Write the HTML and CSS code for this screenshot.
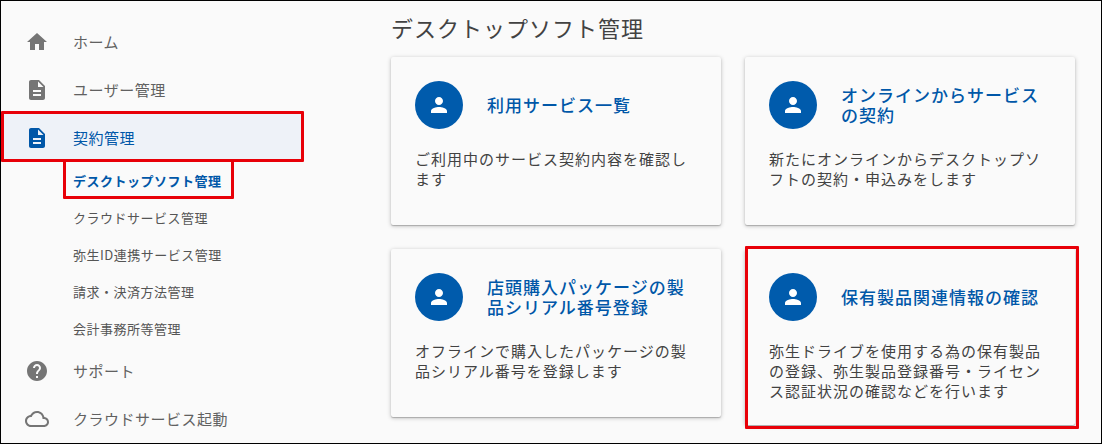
FILE: index.html
```html
<!DOCTYPE html>
<html lang="ja">
<head>
	<meta charset="UTF-8">
	<meta name="viewport" content="width=device-width, initial-scale=1">
	<title>デスクトップソフト管理</title>
	<link rel="stylesheet" href="styles.css">
</head>
<body>
<svg class="sprite" aria-hidden="true">
	<symbol id="i-home" viewBox="0 0 24 24"><path d="M10 20v-6h4v6h5v-8h3L12 3 2 12h3v8z"/></symbol>
	<symbol id="i-doc" viewBox="0 0 24 24"><path d="M14 2H6c-1.100 0-1.990.900-1.990 2L4 20c0 1.100.890 2 1.990 2H18c1.100 0 2-.900 2-2V8l-6-6zm2 16H8v-2h8v2zm0-4H8v-2h8v2zm-3-5V3.500L18.500 9H13z"/></symbol>
	<symbol id="i-help" viewBox="0 0 24 24"><path d="M12 2C6.480 2 2 6.480 2 12s4.480 10 10 10 10-4.480 10-10S17.520 2 12 2zm1 17h-2v-2h2v2zm2.070-7.750l-.900.920C13.450 12.900 13 13.500 13 15h-2v-.500c0-1.100.450-2.100 1.170-2.830l1.240-1.260c.370-.360.590-.860.590-1.410 0-1.100-.900-2-2-2s-2 .900-2 2H8c0-2.210 1.790-4 4-4s4 1.790 4 4c0 .880-.360 1.680-.930 2.250z"/></symbol>
	<symbol id="i-cloud" viewBox="0 0 24 24"><path d="M19.350 10.040C18.670 6.590 15.640 4 12 4 9.110 4 6.600 5.640 5.350 8.040 2.340 8.360 0 10.910 0 14c0 3.310 2.690 6 6 6h13c2.760 0 5-2.240 5-5 0-2.640-2.050-4.780-4.650-4.960zM19 18H6c-2.210 0-4-1.790-4-4s1.790-4 4-4h.710C7.370 7.690 9.480 6 12 6c3.040 0 5.500 2.460 5.500 5.500v.500H19c1.660 0 3 1.340 3 3s-1.340 3-3 3z"/></symbol>
	<symbol id="i-person" viewBox="0 0 24 24"><path d="M12 12c2.210 0 4-1.790 4-4s-1.790-4-4-4-4 1.790-4 4 1.790 4 4 4zm0 2c-2.670 0-8 1.340-8 4v2h16v-2c0-2.660-5.330-4-8-4z"/></symbol>
</svg>

<div class="page">
	<nav class="side">
		<a class="side-item" href="#"><svg class="icon"><use href="#i-home"/></svg>ホーム</a>
		<a class="side-item" href="#"><svg class="icon"><use href="#i-doc"/></svg>ユーザー管理</a>
		<a class="side-item active marked" href="#"><svg class="icon"><use href="#i-doc"/></svg>契約管理</a>
		<ul class="side-sub">
			<li><a class="current marked" href="#">デスクトップソフト管理</a></li>
			<li><a href="#">クラウドサービス管理</a></li>
			<li><a href="#">弥生ID連携サービス管理</a></li>
			<li><a href="#">請求・決済方法管理</a></li>
			<li><a href="#">会計事務所等管理</a></li>
		</ul>
		<a class="side-item" href="#"><svg class="icon"><use href="#i-help"/></svg>サポート</a>
		<a class="side-item" href="#"><svg class="icon"><use href="#i-cloud"/></svg>クラウドサービス起動</a>
	</nav>

	<main class="main">
		<h1>デスクトップソフト管理</h1>
		<div class="cards">
			<section class="card">
				<div class="card-head">
					<span class="avatar"><svg class="icon"><use href="#i-person"/></svg></span>
					<h2><a href="#">利用サービス一覧</a></h2>
				</div>
				<p>ご利用中のサービス契約内容を確認します</p>
			</section>
			<section class="card">
				<div class="card-head">
					<span class="avatar"><svg class="icon"><use href="#i-person"/></svg></span>
					<h2><a href="#">オンラインからサービスの契約</a></h2>
				</div>
				<p>新たにオンラインからデスクトップソフトの契約・申込みをします</p>
			</section>
			<section class="card">
				<div class="card-head">
					<span class="avatar"><svg class="icon"><use href="#i-person"/></svg></span>
					<h2><a href="#">店頭購入パッケージの製品シリアル番号登録</a></h2>
				</div>
				<p>オフラインで購入したパッケージの製品シリアル番号を登録します</p>
			</section>
			<section class="card marked">
				<div class="card-head">
					<span class="avatar"><svg class="icon"><use href="#i-person"/></svg></span>
					<h2><a href="#">保有製品関連情報の確認</a></h2>
				</div>
				<p>弥生ドライブを使用する為の保有製品の登録、弥生製品登録番号・ライセンス認証状況の確認などを行います</p>
			</section>
		</div>
	</main>
</div>
</body>
</html>
```
FILE: styles.css
```css
*{margin: 0;padding: 0;box-sizing: border-box;}
body{
	background-color: #fafafa;
	color: #424242;
	font-family: "Noto Sans CJK JP", sans-serif;
	font-size: 16px;
	letter-spacing: 0.03125em;
}
a{color: inherit;text-decoration: none;}
ul{list-style: none;}
.sprite{display: none;}
.icon{
	flex: none;
	width: 24px;
	height: 24px;
	fill: currentColor;
}
.page{
	display: flex;
	min-height: 100vh;
	border: 1px solid #000;
}

/* side menu */
.side{
	flex: none;
	width: 300px;
	padding-top: 17px;
}
.side-item{
	display: flex;
	align-items: center;
	gap: 24px;
	height: 48px;
	padding: 0 24px;
	color: #616161;
	font-size: 15px;
	line-height: 20px;
}
.side-item .icon{color: #757575;}
.side-item.active{background-color: #eef2f8;}
.side-item.active,
.side-item.active .icon{color: #0057a8;}
.side-sub{
	padding-left: 72px;
	color: #555;
	font-size: 13px;
	line-height: 37px;
}
.side-sub a{display: inline-block;vertical-align: top;}
.side-sub .current{color: #0057a8;font-weight: bold;}

/* main */
.main{
	flex: 1;
	padding: 10px 26px 16px 90px;
}
h1{
	margin-bottom: 14px;
	font-size: 22px;
	font-weight: normal;
	line-height: 32px;
	letter-spacing: 1px;
}
.cards{
	display: grid;
	grid-template-columns: 1fr 1fr;
	align-items: start;
	gap: 24px;
	letter-spacing: 1px;
}
.card{
	min-height: 168px;
	padding: 24px;
	border-radius: 2px;
	box-shadow: 0 1px 4px rgba(0, 0, 0, 0.25), 0 1px 1px rgba(0, 0, 0, 0.2);
}
.card-head{
	display: flex;
	align-items: center;
	gap: 24px;
	margin-bottom: 20px;
}
.avatar{
	display: flex;
	flex: none;
	align-items: center;
	justify-content: center;
	width: 48px;
	height: 48px;
	border-radius: 50%;
	background-color: #005bac;
	color: #fff;
}
.card h2{
	color: #0057a8;
	font-size: 17px;
	font-weight: 500;
	line-height: 20px;
}
.card p{font-size: 15px;line-height: 20px;}

/* red frames laid over the marked items */
.marked{position: relative;}
.marked::after{
	content: "";
	position: absolute;
	top: -3px;
	right: -3px;
	bottom: 0;
	left: 0;
	border: 3px solid #e80008;
	border-radius: 1px;
	pointer-events: none;
}
.side-sub .marked::after{
	right: -12px;
	left: -10px;
}
.card.marked::after{
	right: -4px;
	bottom: -4px;
}
```
